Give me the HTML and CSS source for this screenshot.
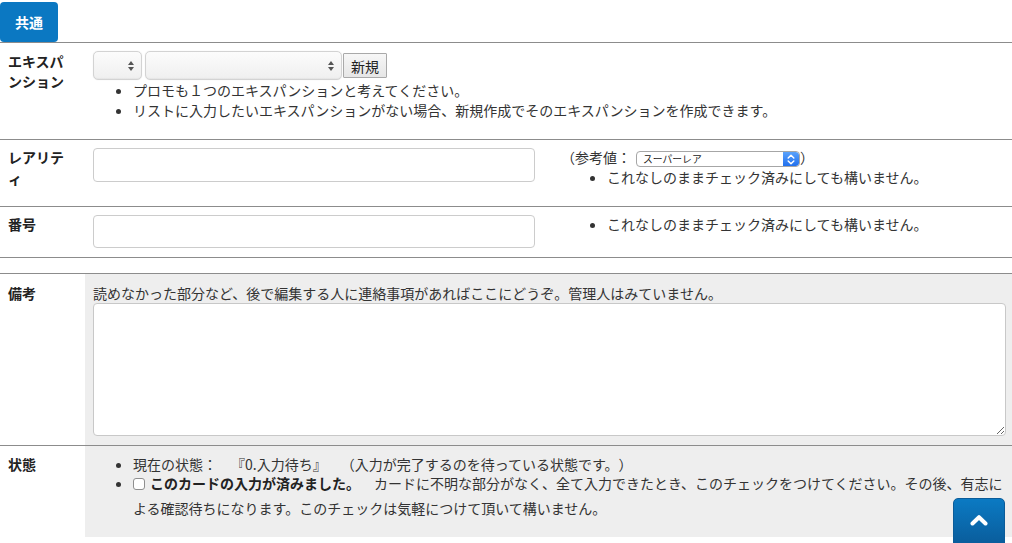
FILE: index.html
```html
<!DOCTYPE html>
<html lang="ja">
<head>
<meta charset="utf-8">
<title>カード入力</title>
<link rel="stylesheet" href="styles.css">
</head>
<body>
<div class="tabs"><span class="tab">共通</span></div>

<div class="form">
  <div class="row row-exp">
    <div class="label">エキスパ<br>ンション</div>
    <div class="cell">
      <div class="selects">
        <span class="sel sel-a"><span class="updown"><i class="up"></i><i class="down"></i></span></span>
        <span class="sel sel-b"><span class="updown"><i class="up"></i><i class="down"></i></span></span>
        <button class="btn-new" type="button">新規</button>
      </div>
      <ul class="notes">
        <li>プロモも１つのエキスパンションと考えてください。</li>
        <li>リストに入力したいエキスパンションがない場合、新規作成でそのエキスパンションを作成できます。</li>
      </ul>
    </div>
  </div>

  <div class="row row-rarity">
    <div class="label label-21">レアリテ<br>ィ</div>
    <div class="cell split">
      <input class="text-input" type="text">
      <div class="side">
        <div class="ref">（参考値：<span class="mini-sel"><span class="mini-text">スーパーレア</span><span class="mini-btn"><svg width="8" height="11" viewBox="0 0 8 11"><path d="M1.2 4 L4 1.3 L6.8 4 M1.2 7 L4 9.7 L6.8 7" fill="none" stroke="#fff" stroke-width="1.5" stroke-linecap="round" stroke-linejoin="round"/></svg></span></span>）</div>
        <ul class="notes side-notes">
          <li>これなしのままチェック済みにしても構いません。</li>
        </ul>
      </div>
    </div>
  </div>

  <div class="row row-number">
    <div class="label">番号</div>
    <div class="cell split">
      <input class="text-input short" type="text">
      <div class="side">
        <ul class="notes side-notes">
          <li>これなしのままチェック済みにしても構いません。</li>
        </ul>
      </div>
    </div>
  </div>

  <div class="row row-empty"></div>

  <div class="row row-memo">
    <div class="label">備考</div>
    <div class="cell grey memo-cell">
      <div class="memo-hint">読めなかった部分など、後で編集する人に連絡事項があればここにどうぞ。管理人はみていません。</div>
      <textarea class="memo"></textarea>
    </div>
  </div>

  <div class="row row-state">
    <div class="label">状態</div>
    <div class="cell grey state-cell">
      <ul class="notes state-notes">
        <li>現在の状態：　『0.入力待ち』　（入力が完了するのを待っている状態です。）</li>
        <li class="check-item"><input class="chk" type="checkbox"><b>このカードの入力が済みました。</b><span>　カードに不明な部分がなく、全て入力できたとき、このチェックをつけてください。その後、有志による確認待ちになります。このチェックは気軽につけて頂いて構いません。</span></li>
      </ul>
    </div>
  </div>
</div>

<a class="to-top" href="#"><svg width="18" height="12" viewBox="0 0 18 12"><path d="M2.5 9.5 L9 3.2 L15.5 9.5" fill="none" stroke="#fff" stroke-width="4" stroke-linecap="round" stroke-linejoin="round"/></svg></a>
</body>
</html>
```

FILE: styles.css
```css
html, body {
  margin: 0;
  padding: 0;
  background: #fff;
}
body {
  font-family: "Noto Sans CJK JP", "Noto Sans", "Liberation Sans", sans-serif;
  font-size: 14px;
  color: #333;
  text-spacing-trim: space-all;
}

.tabs {
  height: 42px;
  padding-top: 2px;
  box-sizing: border-box;
}
.tab {
  display: inline-flex;
  align-items: center;
  justify-content: center;
  width: 58px;
  height: 40px;
  background: #0b78c2;
  color: #fff;
  font-weight: bold;
  border-radius: 4px;
}

.row {
  display: grid;
  grid-template-columns: 85px 1fr;
  border-top: 1px solid #8c8c8c;
}
.label {
  padding: 8px 8px 0 8px;
  font-weight: bold;
  line-height: 20px;
  color: #222;
}
.cell {
  padding: 8px 6px 0 8px;
  min-width: 0;
}

/* expansion row */
.row-exp .cell {
  padding-bottom: 19px;
}
.selects {
  display: flex;
  align-items: center;
  height: 29px;
}
.sel {
  position: relative;
  display: block;
  height: 29px;
  box-sizing: border-box;
  border: 1px solid #d3d3d3;
  border-radius: 5px;
  background: linear-gradient(#fcfcfc, #efefef);
  box-shadow: inset 0 -1px 1px rgba(0,0,0,0.04), 0 0 1px rgba(0,0,0,0.15);
}
.sel-a { width: 49px; }
.sel-b { width: 197px; margin-left: 3px; }
.updown {
  position: absolute;
  right: 7px;
  top: 9px;
  width: 6px;
  display: flex;
  flex-direction: column;
  gap: 2px;
}
.updown i {
  display: block;
  width: 0;
  height: 0;
  border-left: 3px solid transparent;
  border-right: 3px solid transparent;
}
.updown .up { border-bottom: 4px solid #555; }
.updown .down { border-top: 4px solid #555; }
.btn-new {
  margin-left: 1px;
  height: 25px;
  width: 44px;
  padding: 0;
  font-family: inherit;
  font-size: 14px;
  color: #222;
  background: linear-gradient(#f7f7f7, #e6e6e6);
  border: 1px solid #a9a9a9;
  border-radius: 1px;
}

.notes {
  margin: 0;
  padding-left: 40px;
  line-height: 20px;
}

/* rarity / number rows */
.split {
  display: flex;
  align-items: flex-start;
}
.text-input {
  display: block;
  width: 442px;
  height: 34px;
  box-sizing: border-box;
  margin: 0;
  border: 1px solid #cccccc;
  border-radius: 4px;
  background: #fff;
  flex: none;
}
.text-input.short {
  height: 33px;
}
.side {
  margin-left: 26px;
  margin-top: -1px;
  line-height: 20px;
}
.side-notes {
  padding-left: 46px;
}
.row-rarity .label {
  line-height: 21px;
  padding-top: 7px;
  padding-bottom: 17px;
}
.row-rarity .side-notes li {
  line-height: 21px;
}
.row-number .label {
  padding-top: 7px;
}
.row-number .cell {
  padding-bottom: 9px;
}
.ref {
  white-space: nowrap;
  height: 20px;
}
.mini-sel {
  display: inline-flex;
  align-items: stretch;
  vertical-align: top;
  width: 164px;
  height: 16px;
  box-sizing: border-box;
  border: 1px solid #a6a6a6;
  border-radius: 4px;
  background: #fff;
  overflow: hidden;
  margin: 4px 0 0 5px;
}
.mini-text {
  flex: 1;
  font-size: 9.8px;
  line-height: 14px;
  padding-left: 6px;
  color: #222;
}
.mini-btn {
  width: 16px;
  display: flex;
  align-items: center;
  justify-content: center;
  background: linear-gradient(#5aa2fb, #2170ee);
  border-radius: 0 3px 3px 0;
}

/* empty row */
.row-empty {
  height: 15px;
}

/* memo */
.grey {
  background: #eeeeee;
}
.row-memo .label {
  padding-top: 9px;
}
.memo-cell {
  padding: 9px 6px 9px 8px;
}
.memo-hint {
  line-height: 20px;
}
.memo {
  display: block;
  width: 100%;
  height: 133px;
  box-sizing: border-box;
  margin: 0;
  border: 1px solid #c8c8c8;
  border-radius: 4px;
  background: #fff;
  resize: both;
}

/* state */
.state-cell {
  padding: 8px 6px 16.5px 8px;
}
.state-notes li {
  line-height: 20px;
}
.state-notes li.check-item {
  line-height: 25px;
  margin-top: -3.5px;
}
.state-notes b {
  color: #222;
}
.chk {
  appearance: none;
  -webkit-appearance: none;
  width: 12px;
  height: 12px;
  margin: 0 5px 0 0;
  border: 1px solid #8f8f8f;
  border-radius: 3px;
  background: #fff;
  vertical-align: -1px;
}

/* back to top */
.to-top {
  position: fixed;
  right: 7px;
  bottom: -6px;
  width: 52px;
  height: 51px;
  box-sizing: border-box;
  display: flex;
  align-items: flex-start;
  justify-content: center;
  padding-top: 15px;
  border-radius: 5px;
  border: 1px solid #0b5c99;
  background: linear-gradient(#0b7ac3, #0a5a98);
}
```
